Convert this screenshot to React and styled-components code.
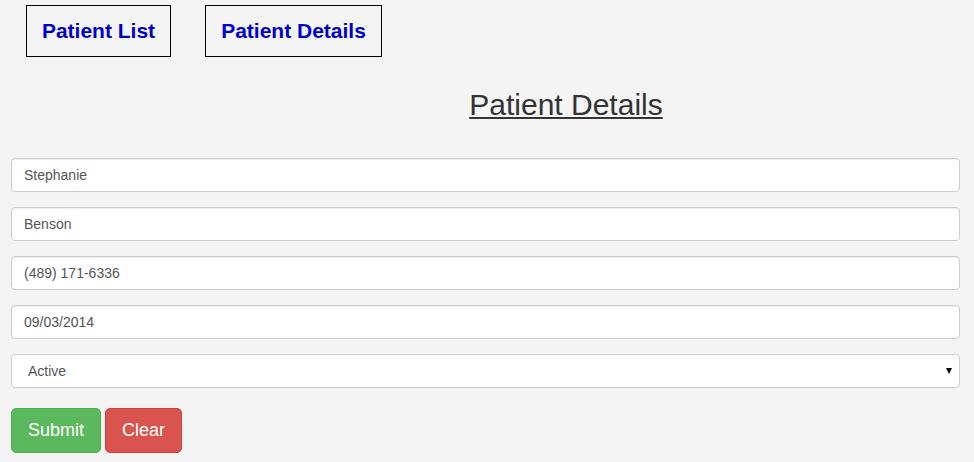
import React from "react";
import styled, { createGlobalStyle } from "styled-components";

const Global = createGlobalStyle`
  html, body { margin: 0; padding: 0; background: #f4f4f4; }
  body { font-family: "Liberation Sans", Arial, sans-serif; }
`;

const Page = styled.div`
  width: 974px;
  height: 462px;
  background: #f4f4f4;
  overflow: hidden;
`;

const Nav = styled.nav`
  display: flex;
  gap: 34px;
  padding: 5px 0 0 26px;
`;

const NavLink = styled.a`
  display: flex;
  align-items: center;
  justify-content: center;
  box-sizing: border-box;
  height: 52px;
  width: ${(p) => p.$w}px;
  border: 1px solid #000;
  color: #0000cc;
  font-weight: bold;
  font-size: 21px;
  text-decoration: none;
  cursor: pointer;
`;

const Heading = styled.h1`
  margin: 28px 0 0;
  padding-left: 158px;
  text-align: center;
  font-weight: normal;
  font-size: 30px;
  line-height: 40px;
  color: #333;
  text-decoration: underline;
  text-underline-offset: 2px;
  text-decoration-thickness: 2px;
`;

const Form = styled.form`
  display: flex;
  flex-direction: column;
  gap: 15px;
  padding: 33px 14px 0 11px;
`;

const Input = styled.input`
  box-sizing: border-box;
  height: 34px;
  width: 100%;
  padding: 0 12px;
  border: 1px solid #ccc;
  border-radius: 4px;
  background: #fff;
  font-family: "Liberation Sans", Arial, sans-serif;
  font-size: 14px;
  color: #555;
  box-shadow: inset 0 1px 1px rgba(0, 0, 0, 0.075);
  outline: none;
`;

const SelectWrap = styled.div`
  position: relative;
`;

const Select = styled.select`
  box-sizing: border-box;
  height: 34px;
  width: 100%;
  padding: 0 12px;
  border: 1px solid #ccc;
  border-radius: 4px;
  background: #fff;
  font-family: "Liberation Sans", Arial, sans-serif;
  font-size: 14px;
  color: #555;
  appearance: none;
  -webkit-appearance: none;
  outline: none;
  text-indent: 4px;
`;

const Arrow = styled.span`
  position: absolute;
  right: 8px;
  top: 14px;
  width: 0;
  height: 0;
  border-left: 3px solid transparent;
  border-right: 3px solid transparent;
  border-top: 6px solid #000;
  pointer-events: none;
`;

const Buttons = styled.div`
  display: flex;
  gap: 4px;
  margin-top: 5px;
`;

const Button = styled.button`
  box-sizing: border-box;
  height: 45px;
  padding: 0 16px;
  border: 1px solid ${(p) => (p.$variant === "success" ? "#4cae4c" : "#d43f3a")};
  background: ${(p) => (p.$variant === "success" ? "#5cb85c" : "#d9534f")};
  color: #fff;
  border-radius: 5px;
  font-family: "Liberation Sans", Arial, sans-serif;
  font-size: 18px;
  width: ${(p) => p.$w}px;
  cursor: pointer;
`;

export default function App() {
  return (
    <Page>
      <Global />
      <Nav>
        <NavLink $w={145}>Patient List</NavLink>
        <NavLink $w={177}>Patient Details</NavLink>
      </Nav>
      <Heading>Patient Details</Heading>
      <Form onSubmit={(e) => e.preventDefault()}>
        <Input defaultValue="Stephanie" />
        <Input defaultValue="Benson" />
        <Input defaultValue="(489) 171-6336" />
        <Input defaultValue="09/03/2014" />
        <SelectWrap>
          <Select defaultValue="Active">
            <option>Active</option>
            <option>Inactive</option>
          </Select>
          <Arrow />
        </SelectWrap>
        <Buttons>
          <Button type="submit" $variant="success" $w={90}>Submit</Button>
          <Button type="button" $variant="danger" $w={77}>Clear</Button>
        </Buttons>
      </Form>
    </Page>
  );
}
